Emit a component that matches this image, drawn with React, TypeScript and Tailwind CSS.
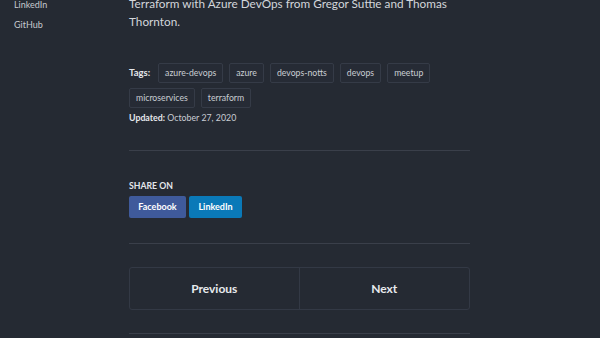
import { Fragment } from 'react';

const TAGS = ['azure-devops', 'azure', 'devops-notts', 'devops', 'meetup', 'microservices', 'terraform'];

function Sidebar() {
  return (
    <aside className="w-[129px] shrink-0 pl-[14px] -mt-[2px] flex flex-col gap-[6px] text-[9px] leading-[14px] text-[#c5c9d0]">
      <a>LinkedIn</a>
      <a>GitHub</a>
    </aside>
  );
}

function Tags() {
  return (
    <div className="flex flex-wrap items-center gap-x-[6px] gap-y-[5px]">
      <span className="mr-[2px] text-[9.5px] font-bold text-[#e4e7eb]">Tags:</span>
      {TAGS.map((t) => (
        <Fragment key={t}>
          <span className="h-[20px] px-[6px] flex items-center rounded-[2px] border border-[#353b47] bg-[#262b35] text-[8.7px] text-[#c9cdd3]">
            {t}
          </span>
        </Fragment>
      ))}
    </div>
  );
}

export default function App() {
  return (
    <div className="h-[338px] w-full overflow-hidden bg-[#252a33] flex font-['Lato',sans-serif]">
      <Sidebar />
      <main className="w-[341px] shrink-0 flex flex-col">
        <p className="-mt-[5px] text-[11.75px] leading-[18px] text-[#d3d6db]">
          Terraform with Azure DevOps from Gregor Suttie and Thomas Thornton.
        </p>

        <div className="mt-[32px]">
          <Tags />
          <p className="mt-[2px] text-[8.8px] leading-[15px] text-[#c9cdd3]">
            <span className="font-bold text-[#e4e7eb]">Updated:</span> October 27, 2020
          </p>
        </div>

        <hr className="mt-[25px] border-t border-[#3a3f4a]" />

        <div className="mt-[29px]">
          <h4 className="text-[8.7px] leading-[12px] font-bold uppercase text-[#e4e7eb]">Share on</h4>
          <div className="mt-[4px] flex gap-[3px]">
            <a className="h-[22px] w-[57px] flex items-center justify-center rounded-[2px] bg-[#3f5a9b] text-[9px] font-bold text-white">
              Facebook
            </a>
            <a className="h-[22px] w-[53px] flex items-center justify-center rounded-[2px] bg-[#0a79b8] text-[9px] font-bold text-white">
              LinkedIn
            </a>
          </div>
        </div>

        <hr className="mt-[25px] border-t border-[#3a3f4a]" />

        <nav className="mt-[23px] h-[43px] grid grid-cols-2 rounded-[3px] border border-[#333945]">
          <a className="flex items-center justify-center border-r border-[#333945] text-[12px] font-bold text-[#e8eaee]">
            Previous
          </a>
          <a className="flex items-center justify-center text-[12px] font-bold text-[#e8eaee]">Next</a>
        </nav>

        <hr className="mt-[23px] border-t border-[#3a3f4a]" />
      </main>
    </div>
  );
}
